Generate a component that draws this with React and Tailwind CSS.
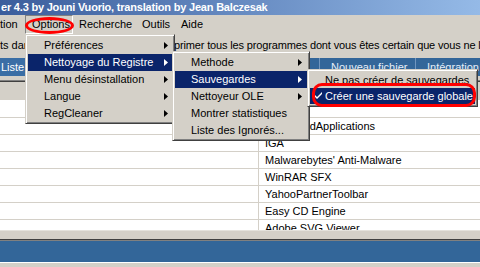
const rows = [
  '',
  'PowerAddApplications',
  'IGA',
  "Malwarebytes' Anti-Malware",
  'WinRAR SFX',
  'YahooPartnerToolbar',
  'Easy CD Engine',
  'Adobe SVG Viewer',
];

function Arrow({ white }) {
  return (
    <svg width="4" height="7" viewBox="0 0 4 7" className="shrink-0">
      <path d="M0 0L4 3.5L0 7Z" fill={white ? '#ffffff' : '#000000'} />
    </svg>
  );
}

function Check() {
  return (
    <svg width="7" height="7" viewBox="0 0 7 7" className="absolute left-[5px] top-[4px]">
      <path d="M0 3L0 5L2 7L7 2L7 0L2 5Z" fill="#ffffff" />
    </svg>
  );
}

/* classic raised menu box */
function MenuPanel({ className, children }) {
  return (
    <div
      className={`absolute bg-[#d4d0c8] border border-t-[#d4d0c8] border-l-[#d4d0c8] border-r-[#404040] border-b-[#404040] shadow-[inset_1px_1px_0_#ffffff,inset_-1px_-1px_0_#808080] p-[2px] ${className}`}
    >
      {children}
    </div>
  );
}

function MenuItem({ label, active, arrow, check, h = 'h-[17px]', pl = 'pl-[16px]', pr = 'pr-[4px]' }) {
  return (
    <div
      className={`relative flex items-center justify-between whitespace-nowrap ${h} ${pl} ${pr} ${
        active ? 'bg-[#0a246a] text-white' : 'text-black'
      }`}
    >
      {check && <Check />}
      <span>{label}</span>
      {arrow && <Arrow white={active} />}
    </div>
  );
}

export default function App() {
  return (
    <div className="relative w-[480px] h-[267px] overflow-hidden bg-[#d4d0c8] font-['Liberation_Sans',Arial,sans-serif] text-[11px] leading-none select-none">
      {/* Title bar */}
      <div className="h-[15px] flex items-center pl-[1px] bg-linear-to-r from-[#3b5d9c] to-[#95bae7] text-white font-bold tracking-[-0.2px] whitespace-nowrap">
        er 4.3 by Jouni Vuorio, translation by Jean Balczesak
      </div>

      {/* Menu bar */}
      <div className="h-[19px] flex items-center whitespace-nowrap text-black">
        <span className="w-[25px]">tion</span>
        <span className="w-[48px] h-[19px] flex items-center pl-[6px] border border-t-[#808080] border-l-[#808080] border-r-white border-b-white">
          Options
        </span>
        <span className="w-[63px] pl-[6px]">Recherche</span>
        <span className="w-[39px] pl-[6px]">Outils</span>
        <span className="pl-[6px]">Aide</span>
      </div>

      {/* Toolbar text row */}
      <div className="h-[22px] flex items-center whitespace-nowrap overflow-hidden text-black">
        <span className="w-[174px] shrink-0 overflow-hidden">ts dans la liste. Sup</span>
        <span className="tracking-[-0.15px]">primer tous les programmes dont vous êtes certain que vous ne le voulez plus</span>
      </div>

      {/* Tabs */}
      <div className="h-[24px] flex items-start pt-[2px] whitespace-nowrap">
        <div className="w-[25px] h-[18px] flex items-center pl-[1px] bg-[#3a6ea5] text-white overflow-hidden">Liste</div>
        <div className="w-[280px] h-[18px] ml-[2px] bg-[#336699]" />
        <div className="w-[13px] h-[18px] bg-[#336699] border-r border-[#7196bf]" />
        <div className="w-[96px] h-[18px] flex items-center pl-[11px] bg-[#336699] text-[#e6eef7] border-r border-[#7196bf]">
          Nouveau fichier
        </div>
        <div className="flex-1 h-[18px] flex items-center pl-[11px] bg-[#336699] text-[#e6eef7]">Intégration</div>
      </div>
      <div className="h-[2px] border-t border-[#808080] bg-[#404040]" />

      {/* list header */}
      <div className="h-[19px] border-b border-white" />

      {/* List */}
      <div className="h-[129px] bg-white overflow-hidden text-black">
        {rows.map((r, i) => (
          <div key={i} className="h-[17px] flex border-b border-[#d4d0c8]">
            <div className="w-[259px] border-r border-[#d4d0c8]" />
            <div className="pl-[6px] flex items-center whitespace-nowrap">{r}</div>
          </div>
        ))}
      </div>

      {/* bottom */}
      <div className="h-[1px] bg-[#e4e2dc]" />
      <div className="h-[8px]" />
      <div className="h-[2px] border-t border-[#404040] bg-[#808080]" />
      <div className="h-[21px] bg-[#336699]" />
      <div className="h-[1px] bg-white" />
      <div className="h-[4px]" />

      {/* Options dropdown */}
      <MenuPanel className="left-[25px] top-[34px] w-[150px] h-[90px]">
        <MenuItem label="Préférences" arrow />
        <MenuItem label="Nettoyage du Registre" arrow active />
        <MenuItem label="Menu désinstallation" arrow />
        <MenuItem label="Langue" arrow />
        <MenuItem label="RegCleaner" arrow />
      </MenuPanel>

      {/* Nettoyage submenu */}
      <MenuPanel className="left-[172px] top-[51px] w-[138px] h-[90px]">
        <MenuItem label="Methode" arrow pr="pr-[5px]" />
        <MenuItem label="Sauvegardes" arrow active pr="pr-[5px]" />
        <MenuItem label="Nettoyeur OLE" arrow pr="pr-[5px]" />
        <MenuItem label="Montrer statistiques" />
        <MenuItem label="Liste des Ignorés..." />
      </MenuPanel>

      {/* Sauvegardes submenu */}
      <MenuPanel className="left-[307px] top-[69px] w-[171px] h-[38px]">
        <MenuItem label="Ne pas créer de sauvegardes" h="h-[16px]" pl="pl-[15px]" />
        <MenuItem label="Créer une sauvegarde globale" h="h-[16px]" pl="pl-[15px]" active check />
      </MenuPanel>

      {/* red annotations */}
      <div className="absolute left-[25px] top-[17px] w-[49px] h-[17px] border-[3px] border-[#ff0000] rounded-[50%]" />
      <div className="absolute left-[312px] top-[83px] w-[164px] h-[24px] border-[3px] border-[#ff0000] rounded-[10px]" />
    </div>
  );
}
